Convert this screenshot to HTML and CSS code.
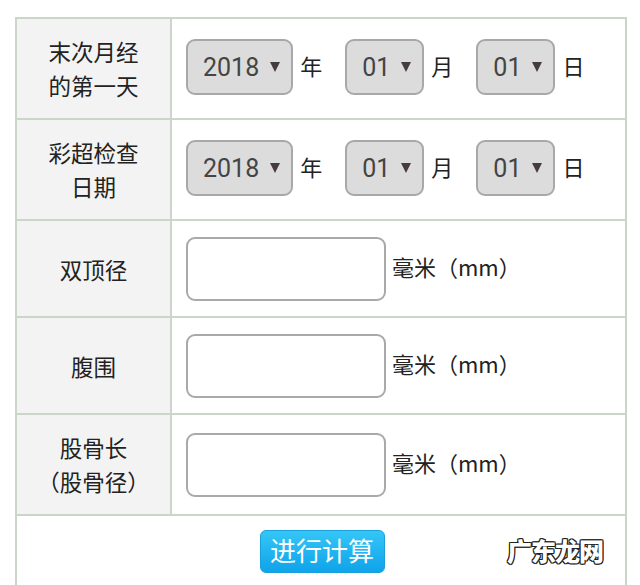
FILE: index.html
```html
<!DOCTYPE html>
<html lang="zh-CN">
<head>
<meta charset="utf-8">
<title>孕周计算</title>
<link rel="stylesheet" href="styles.css">
</head>
<body>
<div class="form">
  <div class="row r2">
    <div class="label">末次月经<br>的第一天</div>
    <div class="field dates">
      <span class="sel year">2018<i class="arr"></i></span><span class="unit">年</span>
      <span class="sel">01<i class="arr"></i></span><span class="unit">月</span>
      <span class="sel">01<i class="arr"></i></span><span class="unit">日</span>
    </div>
  </div>
  <div class="row r2">
    <div class="label">彩超检查<br>日期</div>
    <div class="field dates">
      <span class="sel year">2018<i class="arr"></i></span><span class="unit">年</span>
      <span class="sel">01<i class="arr"></i></span><span class="unit">月</span>
      <span class="sel">01<i class="arr"></i></span><span class="unit">日</span>
    </div>
  </div>
  <div class="row r1">
    <div class="label">双顶径</div>
    <div class="field"><input class="box" type="text"><span class="mm">毫米（mm）</span></div>
  </div>
  <div class="row r1">
    <div class="label">腹围</div>
    <div class="field"><input class="box" type="text"><span class="mm">毫米（mm）</span></div>
  </div>
  <div class="row r2">
    <div class="label">股骨长<br>（股骨径）</div>
    <div class="field"><input class="box" type="text"><span class="mm">毫米（mm）</span></div>
  </div>
  <div class="row last">
    <button class="btn" type="button">进行计算</button>
    <span class="mark">广东龙网</span>
  </div>
</div>
</body>
</html>
```

FILE: styles.css
```css
* { box-sizing: border-box; }
html, body { margin: 0; padding: 0; background: #fff; }
body {
  font-family: Roboto, "Noto Sans CJK SC", sans-serif;
  color: #222;
  overflow: hidden;
}
.form {
  margin: 17px 0 0 15px;
  width: 612px;
  border: 2px solid #ccd5ca;
  border-bottom: none;
}
.row {
  display: flex;
  border-bottom: 2px solid #ccd5ca;
}
.r2 { height: 101px; }
.r1 { height: 97px; }
.label {
  width: 155px;
  flex: none;
  background: #f3f3f3;
  border-right: 2px solid #ccd5ca;
  display: flex;
  align-items: center;
  justify-content: center;
  text-align: center;
  font-size: 22.5px;
  line-height: 34px;
  padding-bottom: 2px;
  font-family: "Noto Sans CJK SC", sans-serif;
}
.r1 .label { padding-bottom: 0; }
.field {
  flex: 1;
  display: flex;
  align-items: center;
  padding-left: 14px;
}
.dates { padding-bottom: 3px; }
.sel {
  display: inline-flex;
  align-items: center;
  height: 56px;
  padding: 0 11px 0 15px;
  border: 2px solid #a8a8a8;
  border-radius: 9px;
  background: #dcdcdc;
  color: #444;
  font-size: 25px;
  font-family: Roboto, sans-serif;
}
.arr {
  display: inline-block;
  width: 0;
  height: 0;
  margin-left: 11px;
  border-left: 5px solid transparent;
  border-right: 5px solid transparent;
  border-top: 10px solid #453c3c;
}
.unit {
  font-size: 22px;
  margin: 0 23px 0 7px;
  padding-bottom: 5px;
  font-family: "Noto Sans CJK SC", sans-serif;
}
.box {
  width: 200px;
  height: 64px;
  border: 2px solid #a9a9a9;
  border-radius: 9px;
  background: #fff;
  margin: 0;
}
.mm {
  margin-left: 6px;
  font-size: 22px;
  padding-bottom: 5px;
  font-family: "Noto Sans CJK SC", sans-serif;
}
.last {
  height: 80px;
  border-bottom: none;
  position: relative;
  justify-content: center;
  align-items: flex-start;
  padding-top: 14px;
}
.btn {
  width: 125px;
  height: 43px;
  margin-left: 2px;
  border: 1px solid #1a9fdc;
  border-radius: 6px;
  background: linear-gradient(#35c6f7, #0fa3ea);
  color: #fff;
  font-size: 26px;
  line-height: 1;
  padding: 0 0 3px;
  font-family: "Noto Sans CJK SC", sans-serif;
}
.mark {
  position: absolute;
  left: 490px;
  top: 16px;
  font-size: 25px;
  font-weight: 900;
  letter-spacing: -1px;
  color: #fff;
  text-shadow:
    -1px -1px 0 #222, 1px -1px 0 #222,
    -1px 1px 0 #222, 1px 1px 0 #222,
    0 -1px 0 #222, 0 1px 0 #222,
    -1px 0 0 #222, 1px 0 0 #222;
  font-family: "Noto Sans CJK SC", sans-serif;
}
```
